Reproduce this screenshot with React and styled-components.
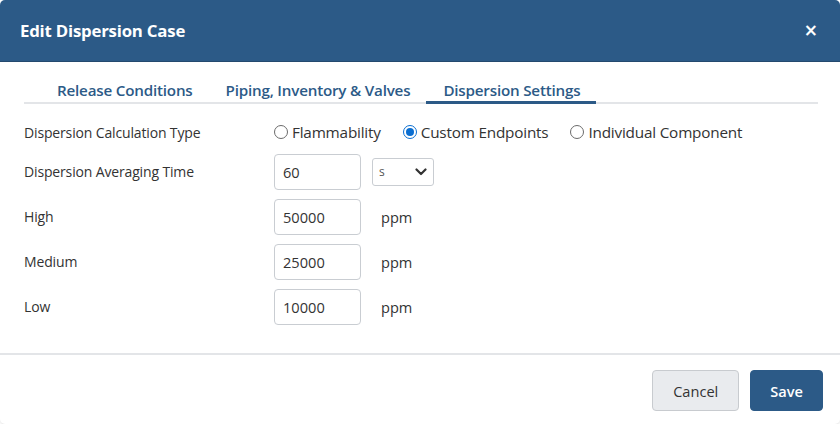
import React, { useState } from 'react';
import styled, { createGlobalStyle } from 'styled-components';

const GlobalStyle = createGlobalStyle`
    html, body {
        margin: 0;
        padding: 0;
        background: #fff;
    }
    body {
        font-family: "Open Sans", "Noto Sans", sans-serif;
    }
`;

const Dialog = styled.div`
    width: 840px;
    height: 424px;
    background: #fff;
    border-radius: 5px;
    overflow: hidden;
    display: flex;
    flex-direction: column;
    box-sizing: border-box;
    box-shadow: 0 1px 3px rgba(0, 0, 0, 0.12);
`;

const Header = styled.div`
    height: 61px;
    background: #2c5a87;
    border-bottom: 1px solid #24496e;
    display: flex;
    align-items: center;
    justify-content: space-between;
    padding: 0 22px 0 20px;
    color: #fff;
`;

const Title = styled.h2`
    margin: 0;
    font-size: 16.8px;
    font-weight: 700;
    letter-spacing: -0.2px;
`;

const Close = styled.button`
    border: none;
    background: none;
    color: #fff;
    font-size: 17px;
    font-weight: 700;
    line-height: 1;
    padding: 0;
    cursor: pointer;
    font-family: "DejaVu Sans", sans-serif;
`;

const Body = styled.div`
    flex: 1;
    padding: 15px 22px 0 24px;
`;

const Tabs = styled.div`
    display: flex;
    padding-left: 16px;
    border-bottom: 2px solid #e3e5e8;
`;

const Tab = styled.div`
    padding: 3px 16px 1px 17px;
    margin-bottom: -2px;
    font-size: 15.2px;
    font-weight: 600;
    color: #2c5a87;
    letter-spacing: -0.2px;
    border-bottom: 3px solid ${({ active }) => (active ? '#2c5a87' : 'transparent')};
    cursor: pointer;
`;

const Form = styled.div`
    display: flex;
    flex-direction: column;
    padding-top: 11px;
`;

const Row = styled.div`
    display: grid;
    grid-template-columns: 250px auto;
    align-items: center;
    min-height: ${({ h }) => h || 45}px;
`;

const Label = styled.label`
    font-size: 14px;
    color: #333;
    letter-spacing: -0.15px;
`;

const Controls = styled.div`
    display: flex;
    align-items: center;
    gap: 11px;
`;

const RadioGroup = styled.div`
    display: flex;
    align-items: center;
    gap: 22px;
`;

const RadioItem = styled.label`
    display: flex;
    align-items: center;
    gap: 4px;
    font-size: 15.3px;
    color: #333;
    letter-spacing: -0.2px;
    cursor: pointer;
`;

const RadioDot = styled.span`
    width: 14px;
    height: 14px;
    border-radius: 50%;
    box-sizing: border-box;
    border: 1px solid ${({ checked }) => (checked ? '#0a6ed1' : '#6b6b6b')};
    background: #fff;
    display: flex;
    align-items: center;
    justify-content: center;
    &::after {
        content: '';
        width: 8px;
        height: 8px;
        border-radius: 50%;
        background: ${({ checked }) => (checked ? '#0a6ed1' : 'transparent')};
    }
`;

const Input = styled.input`
    width: 87px;
    height: 36px;
    box-sizing: border-box;
    border: 1px solid #c9cdd2;
    border-radius: 4px;
    padding: 0 8px;
    font-size: 14.6px;
    font-family: inherit;
    color: #333;
    outline: none;
`;

const Select = styled.div`
    width: 62px;
    height: 28px;
    box-sizing: border-box;
    border: 1px solid #c9cdd2;
    border-radius: 3px;
    display: flex;
    align-items: center;
    justify-content: space-between;
    padding: 0 6px 0 6px;
    font-size: 12px;
    color: #555;
`;

const Unit = styled.span`
    font-size: 14.6px;
    color: #333;
    margin-left: 9px;
`;

const Footer = styled.div`
    border-top: 2px solid #e3e5e8;
    height: 71px;
    box-sizing: border-box;
    display: flex;
    justify-content: flex-end;
    align-items: flex-start;
    gap: 11px;
    padding: 15px 17px 0 0;
`;

const Button = styled.button`
    height: 41px;
    border-radius: 4px;
    font-family: inherit;
    font-size: 14.6px;
    padding: 0 ${({ primary }) => (primary ? 19 : 20)}px;
    cursor: pointer;
    background: ${({ primary }) => (primary ? '#2c5a87' : '#e9ebee')};
    color: ${({ primary }) => (primary ? '#fff' : '#333')};
    font-weight: ${({ primary }) => (primary ? 600 : 400)};
    border: 1px solid ${({ primary }) => (primary ? '#2c5a87' : '#c8cbcf')};
`;

const Chevron = () => (
    <svg width="12" height="8" viewBox="0 0 12 8">
        <path d="M1.5 1.5 L6 6 L10.5 1.5" fill="none" stroke="#333" strokeWidth="2.2" strokeLinecap="round" strokeLinejoin="round" />
    </svg>
);

const levels = [
    { label: 'High', value: '50000' },
    { label: 'Medium', value: '25000' },
    { label: 'Low', value: '10000' },
];

const App = () => {
    const [tab, setTab] = useState('dispersion');
    const [calc, setCalc] = useState('custom');

    return (
        <>
            <GlobalStyle />
            <Dialog>
                <Header>
                    <Title>Edit Dispersion Case</Title>
                    <Close>×</Close>
                </Header>
                <Body>
                    <Tabs>
                        <Tab active={tab === 'release'} onClick={() => setTab('release')}>Release Conditions</Tab>
                        <Tab active={tab === 'piping'} onClick={() => setTab('piping')}>Piping, Inventory &amp; Valves</Tab>
                        <Tab active={tab === 'dispersion'} onClick={() => setTab('dispersion')}>Dispersion Settings</Tab>
                    </Tabs>
                    <Form>
                        <Row h={34}>
                            <Label>Dispersion Calculation Type</Label>
                            <RadioGroup>
                                <RadioItem onClick={() => setCalc('flam')}>
                                    <RadioDot checked={calc === 'flam'} />Flammability
                                </RadioItem>
                                <RadioItem onClick={() => setCalc('custom')}>
                                    <RadioDot checked={calc === 'custom'} />Custom Endpoints
                                </RadioItem>
                                <RadioItem onClick={() => setCalc('component')}>
                                    <RadioDot checked={calc === 'component'} />Individual Component
                                </RadioItem>
                            </RadioGroup>
                        </Row>
                        <Row>
                            <Label>Dispersion Averaging Time</Label>
                            <Controls>
                                <Input defaultValue="60" />
                                <Select>s<Chevron /></Select>
                            </Controls>
                        </Row>
                        {levels.map((l) => (
                            <Row key={l.label}>
                                <Label>{l.label}</Label>
                                <Controls>
                                    <Input defaultValue={l.value} />
                                    <Unit>ppm</Unit>
                                </Controls>
                            </Row>
                        ))}
                    </Form>
                </Body>
                <Footer>
                    <Button>Cancel</Button>
                    <Button primary>Save</Button>
                </Footer>
            </Dialog>
        </>
    );
};

export default App;
